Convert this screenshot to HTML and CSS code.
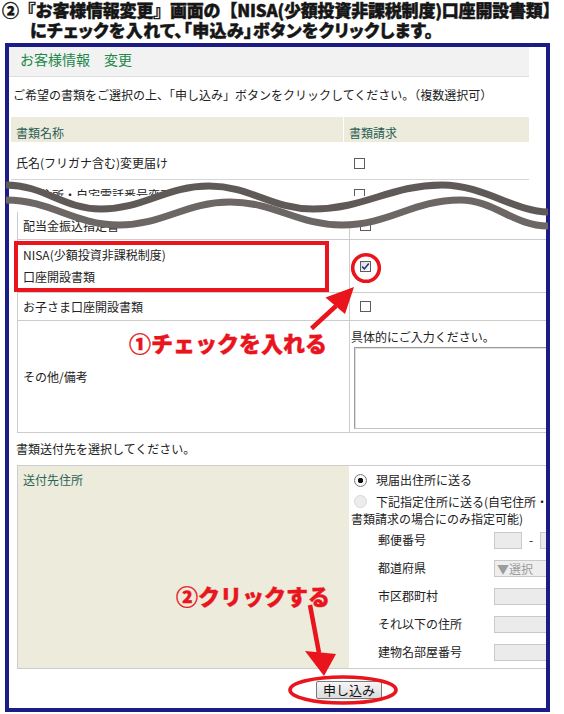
FILE: index.html
```html
<!DOCTYPE html>
<html lang="ja">
<head>
<meta charset="utf-8">
<title>お客様情報変更</title>
<link rel="stylesheet" href="styles.css">
</head>
<body>
<div class="page">
  <h1 class="title">
    <span class="title-line1">②『お客様情報変更』画面の【NISA(少額投資非課税制度)口座開設書類】</span>
    <span class="title-line2">にチェックを入れて、「申込み」ボタンをクリックします。</span>
  </h1>

  <div class="frame">
    <div class="upper">
      <div class="pagehead">お客様情報　変更</div>
      <p class="lead">ご希望の書類をご選択の上、「申し込み」ボタンをクリックしてください。（複数選択可）</p>
      <div class="dtable dtable-upper">
        <div class="drow dhead">
          <div class="dname">書類名称</div>
          <div class="dreq">書類請求</div>
        </div>
        <div class="drow drow-1">
          <div class="dname">氏名(フリガナ含む)変更届け</div>
          <div class="dreq"><span class="cb"></span></div>
        </div>
        <div class="drow drow-2">
          <div class="dname">自宅住所・自宅電話番号変更届</div>
          <div class="dreq"><span class="cb"></span></div>
        </div>
      </div>
    </div>

    <div class="lower">
      <div class="dtable dtable-lower">
        <div class="drow lrow-a">
          <div class="dname">配当金振込指定書</div>
          <div class="dreq"><span class="cb"></span></div>
        </div>
        <div class="drow lrow-nisa">
          <div class="dname"><span>NISA(少額投資非課税制度)</span><span>口座開設書類</span></div>
          <div class="dreq"><span class="cb cb-checked"><svg class="tick" viewBox="0 0 9 9" width="9" height="9"><path d="M1.2 4.6 L3.4 6.9 L7.8 1.6"/></svg></span></div>
        </div>
        <div class="drow lrow-kids">
          <div class="dname">お子さま口座開設書類</div>
          <div class="dreq"><span class="cb"></span></div>
        </div>
        <div class="drow lrow-other">
          <div class="dname">その他/備考</div>
          <div class="dreq">
            <div class="memo-hint">具体的にご入力ください。</div>
            <div class="memo"></div>
          </div>
        </div>
      </div>

      <p class="lead2">書類送付先を選択してください。</p>

      <div class="addr">
        <div class="addr-label">送付先住所</div>
        <div class="addr-body">
          <div class="opt"><span class="radio radio-on"></span><span>現届出住所に送る</span></div>
          <div class="opt opt-2"><span class="radio radio-off"></span><span>下記指定住所に送る(自宅住所・自宅電話番号変更届以外の</span></div>
          <div class="opt-wrap">書類請求の場合にのみ指定可能)</div>
          <div class="frow"><span class="frow-label">郵便番号</span><span class="box box-zip1"></span><span class="dash">-</span><span class="box box-zip2"></span></div>
          <div class="frow"><span class="frow-label">都道府県</span><span class="box box-select">▼選択</span></div>
          <div class="frow"><span class="frow-label">市区郡町村</span><span class="box box-wide"></span></div>
          <div class="frow"><span class="frow-label">それ以下の住所</span><span class="box box-wide"></span></div>
          <div class="frow"><span class="frow-label">建物名部屋番号</span><span class="box box-wide"></span></div>
        </div>
      </div>

      <div class="actions"><button class="submit" type="button">申し込み</button></div>
    </div>
  </div>

  <div class="redbox"></div>

  <svg class="overlay" viewBox="0 0 564 714" width="564" height="714" aria-hidden="true">
    <defs>
      <clipPath id="frameInner"><rect x="10" y="160" width="536" height="90"/></clipPath>
    </defs>
    <path class="wave-mask" clip-path="url(#frameInner)" d="M 6 185 C 44 185, 63 209, 101 209 C 144 209, 166 186, 209 186 C 251 186, 271 209, 313 209 C 365 209, 390 185, 442 185 C 484 185, 515 212, 548 212 L 548 226 C 513 226, 495 200, 460 200 C 413 200, 389 225, 342 225 C 297 225, 275 202, 230 202 C 186 202, 163 225, 119 225 C 74 225, 51 200, 6 200 Z"/>
    <path class="wave-top" d="M 6 185 C 44 185, 63 209, 101 209 C 144 209, 166 186, 209 186 C 251 186, 271 209, 313 209 C 365 209, 390 185, 442 185 C 484 185, 515 212, 548 212"/>
    <path class="wave-bottom" d="M 6 200 C 51 200, 74 225, 119 225 C 163 225, 186 202, 230 202 C 275 202, 297 225, 342 225 C 389 225, 413 200, 460 200 C 495 200, 513 226, 548 226"/>
    <circle class="ring" cx="366" cy="268" r="13.3"/>
    <line class="arrow-shaft" x1="311.5" y1="328.5" x2="336" y2="306"/>
    <polygon class="arrow-head" points="354,287 325.5,297.5 345,314"/>
    <line class="arrow-shaft" x1="310" y1="605" x2="319" y2="653"/>
    <polygon class="arrow-head" points="324,676 305,651 336,654"/>
    <ellipse class="ring" cx="343" cy="690" rx="53" ry="13"/>
  </svg>

  <div class="note note-1">①チェックを入れる</div>
  <div class="note note-2">②クリックする</div>
</div>
</body>
</html>
```

FILE: styles.css
```css
* { box-sizing: border-box; }

html, body {
  margin: 0;
  padding: 0;
  background: #ffffff;
}

body {
  font-family: "Noto Sans CJK JP", "Noto Sans", sans-serif;
  color: #222222;
}

.page {
  position: relative;
  width: 564px;
  height: 714px;
  overflow: hidden;
}

/* ---------- title ---------- */
.title {
  margin: 0;
  height: 43px;
  padding: 0 0 0 2px;
  font-size: 17px;
  line-height: 20px;
  font-weight: 900;
  color: #161616;
  white-space: nowrap;
  -webkit-text-stroke: 0.45px #161616;
}

.title-line1 {
  display: block;
  letter-spacing: -0.2px;
}

.title-line2 {
  display: block;
  padding-left: 28px;
  font-feature-settings: "palt";
  letter-spacing: 0.4px;
}

/* ---------- frame ---------- */
.frame {
  position: relative;
  margin-left: 5px;
  width: 545px;
  height: 669px;
  border: 4px solid #1c1c88;
  overflow: hidden;
  background: #ffffff;
  font-size: 12px;
  line-height: 16px;
}

.upper {
  height: 149px;
  overflow: hidden;
}

.pagehead {
  width: 520px;
  height: 30px;
  background: #f2f2f2;
  border-bottom: 1px solid #dddddd;
  padding-left: 11px;
  font-size: 14px;
  line-height: 24px;
  color: #21884a;
}

.lead {
  margin: 10px 0 0 4px;
  white-space: nowrap;
}

/* ---------- document tables ---------- */
.dtable-upper {
  margin: 14px 0 0 2px;
  width: 518px;
}

.drow {
  display: flex;
  border-bottom: 1px solid #d6d6d6;
}

.dname,
.dreq {
  display: flex;
  align-items: center;
}

.dname {
  flex-shrink: 0;
  padding-left: 5px;
  white-space: nowrap;
}

.dtable-upper .dname { width: 332px; }

.dreq {
  flex: 1;
  padding-left: 11px;
}

.dhead {
  height: 25px;
  background: #ecebdc;
  color: #2b5d54;
  border-bottom: none;
}

.dhead .dname,
.dhead .dreq { padding-top: 6px; }

.dhead .dreq {
  border-left: 1px solid #ffffff;
  padding-left: 5px;
}

.drow-1 { height: 38px; }
.drow-1 .dname,
.drow-1 .dreq { padding-top: 5px; }

.drow-2 { height: 30px; }

.lower { padding-top: 16px; }

.dtable-lower {
  margin-left: 8px;
  width: 600px;
  border-left: 1px solid #cccccc;
}

.dtable-lower .drow { border-bottom-color: #cccccc; }
.dtable-lower .dname { width: 331px; }
.dtable-lower .dreq {
  border-left: 1px solid #cccccc;
  padding-left: 10px;
}

.lrow-a { height: 28px; }
.lrow-nisa { height: 53px; }
.lrow-nisa .dname {
  flex-direction: column;
  align-items: flex-start;
  justify-content: center;
  line-height: 22px;
}
.lrow-kids { height: 28px; }
.lrow-other { height: 112px; }
.lrow-other .dreq {
  display: block;
  padding: 8px 0 0 1px;
}

.memo {
  margin: 2px 0 0 3px;
  width: 240px;
  height: 82px;
  border: 1px solid #9d9d9d;
  border-right-color: #d0d0d0;
  border-bottom-color: #c4c4c4;
  box-shadow: inset 1px 1px 0 #dedede;
  background: #ffffff;
}

/* checkbox */
.cb {
  display: inline-flex;
  align-items: center;
  justify-content: center;
  width: 11px;
  height: 11px;
  border: 1px solid #5c5c5c;
  background: #ffffff;
}

.cb-checked {
  background: linear-gradient(135deg, #dcdcdc, #ffffff);
}

.tick path {
  fill: none;
  stroke: #1f3580;
  stroke-width: 1.6;
}

/* ---------- address ---------- */
.lead2 {
  margin: 8px 0 0 7px;
  white-space: nowrap;
}

.addr {
  display: flex;
  margin: 8px 0 0 8px;
  width: 600px;
  height: 204px;
  border-top: 1px solid #cccccc;
  border-bottom: 1px solid #cccccc;
}

.addr-label {
  flex-shrink: 0;
  width: 332px;
  background: #ecebdc;
  border-left: 1px solid #cccccc;
  padding: 6px 0 0 5px;
  color: #2b6357;
}

.addr-body {
  flex: 1;
  min-width: 0;
  padding-top: 3px;
  white-space: nowrap;
}

.opt {
  display: flex;
  align-items: center;
  gap: 9px;
  height: 22px;
  padding-left: 5px;
}

.opt-2 { height: 21px; }

.opt-wrap {
  height: 14px;
  line-height: 14px;
  padding-left: 2px;
}

.radio {
  display: inline-block;
  flex-shrink: 0;
  width: 13px;
  height: 13px;
  border-radius: 50%;
}

.radio-on {
  border: 1px solid #7e7e7e;
  background: radial-gradient(circle, #111111 0 2.4px, #ffffff 3px, #e4e4e4 100%);
}

.radio-off {
  border: 1px solid #d8d8d8;
  background: #ececec;
}

.frow {
  display: flex;
  align-items: center;
  height: 28px;
  padding-left: 29px;
}

.frow-label {
  flex-shrink: 0;
  width: 116px;
}

.box {
  display: inline-block;
  flex-shrink: 0;
  height: 17px;
  border: 1px solid #c9c9c9;
  background: #ebebeb;
}

.box-zip1 { width: 28px; }
.box-zip2 { width: 30px; }
.box-wide { width: 80px; }

.dash {
  flex-shrink: 0;
  width: 18px;
  text-align: center;
}

.box-select {
  width: 80px;
  padding-left: 2px;
  font-size: 12px;
  line-height: 15px;
  color: #9c9c9c;
  background: #eeeeee;
}

.actions { padding: 12px 0 0 307px; }

.submit {
  display: block;
  width: 66px;
  height: 18px;
  margin: 0;
  padding: 0;
  border: 1px solid #7a7a7a;
  border-radius: 2px;
  background: linear-gradient(#f6f6f6, #dcdcdc);
  font-family: "Noto Sans CJK JP", "Noto Sans", sans-serif;
  font-size: 13px;
  line-height: 16px;
  color: #111111;
}

/* ---------- annotations ---------- */
.redbox {
  position: absolute;
  left: 14px;
  top: 241px;
  width: 315px;
  height: 51px;
  border: 4px solid #e9141c;
}

.overlay {
  position: absolute;
  left: 0;
  top: 0;
  pointer-events: none;
}

.wave-mask { fill: #ffffff; }

.wave-top {
  fill: none;
  stroke: #5f5a58;
  stroke-width: 7;
}

.wave-bottom {
  fill: none;
  stroke: #6c6665;
  stroke-width: 7;
}

.ring {
  fill: none;
  stroke: #e9141c;
  stroke-width: 3.6;
}

.arrow-shaft {
  stroke: #e9141c;
  stroke-width: 4.5;
}

.arrow-head { fill: #e9141c; }

.note {
  position: absolute;
  font-size: 22px;
  line-height: 26px;
  font-weight: 900;
  color: #e9141c;
  white-space: nowrap;
  -webkit-text-stroke: 0.4px #e9141c;
}

.note-1 { left: 129px; top: 329px; }
.note-2 { left: 176px; top: 582px; }
```
